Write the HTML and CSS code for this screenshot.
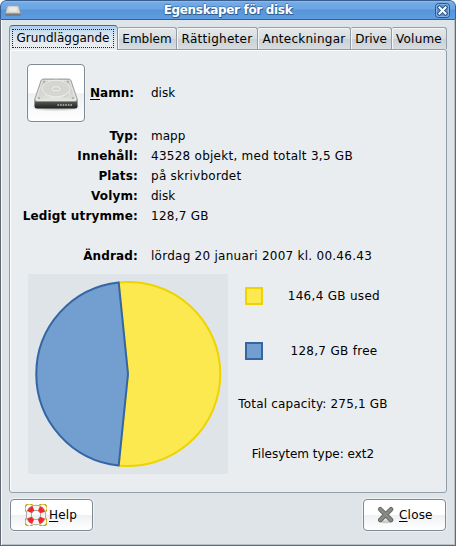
FILE: index.html
```html
<!DOCTYPE html>
<html lang="sv">
<head>
<meta charset="utf-8">
<title>Egenskaper för disk</title>
<link rel="stylesheet" href="styles.css">
</head>
<body>
<svg class="defs" width="0" height="0">
<defs>
<linearGradient id="top" x1="0" y1="0" x2="0" y2="1"><stop offset="0" stop-color="#c6c7c3"/><stop offset="1" stop-color="#dededb"/></linearGradient>
<linearGradient id="front" x1="0" y1="0" x2="0" y2="1"><stop offset="0" stop-color="#6a6d69"/><stop offset="1" stop-color="#1d201d"/></linearGradient>
<filter id="soft" x="-20%" y="-80%" width="140%" height="260%"><feGaussianBlur stdDeviation="1.3"/></filter>
<symbol id="drive" viewBox="0 0 48 36">
<ellipse cx="24" cy="31.5" rx="22" ry="3.5" fill="#777" opacity=".5" filter="url(#soft)"/>
<path d="M2.5 24 45.5 24V31Q45.5 33.5 43 33.5H5Q2.5 33.5 2.5 31Z" fill="url(#front)"/>
<path d="M9 5.5Q9.7 4 11.5 4H36.5Q38.3 4 39 5.5L45 23.5Q46 26.5 43 26.5H5Q2 26.5 3 23.5Z" fill="url(#top)" stroke="#8c8e89" stroke-width=".8"/>
<path d="M10.5 5.5H37.5L43.8 25H4.2Z" fill="none" stroke="#f0f0ee" stroke-width=".7"/>
<ellipse cx="24" cy="13.5" rx="14" ry="8.3" fill="#d5d6d2" stroke="#f0f0ee" stroke-width=".8"/>
<path d="M13 20.5Q23 25.5 33 20.5L37 17Q39 19 35 23H12Z" fill="#cfd0cc" stroke="#f0f0ee" stroke-width=".6"/>
<ellipse cx="24" cy="13.8" rx="4" ry="2.1" fill="#d0d1cd" stroke="#f4f4f2" stroke-width=".9"/>
<g fill="#a4a6a1"><circle cx="12" cy="6.5" r="1"/><circle cx="36" cy="6.5" r="1"/><circle cx="7" cy="23" r="1"/><circle cx="41" cy="23" r="1"/></g>
<path d="M25.5 30H40" stroke="#9a9d97" stroke-width="1.8" stroke-dasharray="1.6 1"/>
</symbol>
</defs>
</svg>
<div class="window">
<header class="titlebar">
<svg class="mini" viewBox="0 0 48 36" preserveAspectRatio="none"><path d="M1 24H47V35H1Z" fill="#777a77"/><path d="M8 3H40L46 27H2Z" fill="#d9dad7" stroke="#a8aaa6" stroke-width="2"/><ellipse cx="24" cy="14" rx="13" ry="8" fill="#e9e9e7"/></svg>
<h1 class="title">Egenskaper för disk</h1>
<svg class="close-x" viewBox="0 0 15 15"><rect x=".5" y=".5" width="14" height="14" rx="3" fill="#5b94d4" stroke="#2f5684"/><rect x="1.5" y="1.5" width="12" height="12" rx="2" fill="none" stroke="#82b3e7"/><path d="M4.5 4.5 10.5 10.5M10.5 4.5 4.5 10.5" stroke="#2f5684" stroke-width="4" stroke-linecap="square"/><path d="M4.5 4.5 10.5 10.5M10.5 4.5 4.5 10.5" stroke="#fff" stroke-width="2" stroke-linecap="square"/></svg>
</header>
<main class="content">
<nav class="tabs">
<div class="tab active"><span class="focus">Grundläggande</span></div>
<div class="tab t2">Emblem</div>
<div class="tab t3">Rättigheter</div>
<div class="tab t4">Anteckningar</div>
<div class="tab t5">Drive</div>
<div class="tab t6">Volume</div>
</nav>
<section class="panel">
<div class="name-row">
<div class="icon-button"><svg width="48" height="36"><use href="#drive"/></svg></div>
<b class="name-label"><u>N</u>amn:</b>
<span class="name-value">disk</span>
</div>
<div class="props">
<b>Typ:</b><span>mapp</span>
<b>Innehåll:</b><span class="wide">43528 objekt, med totalt 3,5 GB</span>
<b>Plats:</b><span class="wide">på skrivbordet</span>
<b>Volym:</b><span>disk</span>
<b>Ledigt utrymme:</b><span class="wide">128,7 GB</span>
<b class="gap">Ändrad:</b><span class="gap wide">lördag 20 januari 2007 kl. 00.46.43</span>
</div>
<div class="usage">
<svg class="pie" viewBox="0 0 200 200"><path d="M100 100 90.7 8.5A92 92 0 1 1 90.7 191.5Z" fill="#fce94f" stroke="#edd400" stroke-width="2"/><path d="M100 100 90.7 191.5A92 92 0 0 1 90.7 8.5Z" fill="#729fcf" stroke="#3465a4" stroke-width="2"/></svg>
<div class="legend">
<div class="key"><i class="swatch used"></i><span class="key-text">146,4 GB used</span></div>
<div class="key"><i class="swatch free"></i><span class="key-text">128,7 GB free</span></div>
<div class="fact total">Total capacity: 275,1 GB</div>
<div class="fact fs">Filesytem type: ext2</div>
</div>
</div>
</section>
<footer class="actions">
<div class="button help">
<svg width="22" height="22" viewBox="0 0 22 22"><circle cx="11" cy="11" r="7.2" fill="none" stroke="#8d8f8a" stroke-width="6"/><circle cx="11" cy="11" r="7.2" fill="none" stroke="#f4f4f2" stroke-width="4.6"/><circle cx="11" cy="11" r="7.2" fill="none" stroke="#ef2929" stroke-width="4.8" stroke-dasharray="5.6 5.71" stroke-dashoffset="-2.85"/><g fill="none" stroke="#c4a000" stroke-width="1.3"><path d="M1.2 7.5A4 4 0 1 1 7.5 1.2M14.5 1.2A4 4 0 1 1 20.8 7.5M20.8 14.5A4 4 0 1 1 14.5 20.8M7.5 20.8A4 4 0 1 1 1.2 14.5"/></g></svg>
<span><u>H</u>elp</span>
</div>
<div class="button close">
<svg width="18" height="18" viewBox="0 0 18 18"><ellipse cx="9" cy="15.8" rx="5" ry="1.5" fill="#ccc"/><path d="M3.3 3.3 14 14M14 3.3 3.3 14" stroke="#666963" stroke-width="4.6" stroke-linecap="round"/><path d="M3.3 3.3 14 14M14 3.3 3.3 14" stroke="#888a85" stroke-width="2.8" stroke-linecap="round"/></svg>
<span><u>C</u>lose</span>
</div>
</footer>
</main>
</div>
</body>
</html>
```
FILE: styles.css
```css
* { box-sizing: border-box; }
body { margin: 0; background: #fff; font: 12px/20px "DejaVu Sans", sans-serif; color: #000; white-space: nowrap; }
svg { display: block; flex: none; }
.defs { position: absolute; }
u { text-underline-offset: 2px; text-decoration-thickness: 1px; text-decoration-skip-ink: none; }
.window { width: 456px; height: 546px; background: #dfe4e8; border-radius: 6px 6px 0 0; overflow: hidden; }
.titlebar { height: 20px; display: flex; align-items: center; padding: 0 5px 0 4px; border: 1px solid #395f90; border-radius: 6px 6px 0 0; background: linear-gradient(#8dbcf0, #70a9e5 2px, #6ca5e2 8px, #5595d8 9px, #5f9de0); }
.mini { width: 16px; height: 11px; }
.title { flex: 1; margin: 0; text-align: center; font-size: 12px; line-height: 18px; letter-spacing: -.33px; color: #fff; text-shadow: 1px 1px #315e93, 0 1px #315e93, -1px 0 #477db8, 0 -1px #477db8; }
.close-x { width: 15px; height: 15px; }
.content { height: 526px; padding: 5px 8px 0; border: solid #626974; border-width: 0 1px 1px; box-shadow: inset 1px 0 #f8f9fa, inset -1px -1px #b8c0c8; }
.tabs { height: 24px; display: flex; align-items: flex-end; }
.tab { height: 22px; border: 1px solid #939ea8; border-left: 0; border-bottom: 0; border-radius: 2px 3px 0 0; background: linear-gradient(#e4e8eb, #d8dde1 50%, #c9d0d5 51%, #d7dce0); box-shadow: inset 1px 1px #f3f5f6; text-align: center; line-height: 22px; }
.active { width: 109px; height: 25px; margin-bottom: -1px; padding: 3px; border: 1px solid #7f91a3; border-top-color: #3d6c9c; border-bottom: 0; border-radius: 4px 4px 0 0; background: linear-gradient(#a9cdf0, #d4e2ee 7px, #e8ecef 18px); position: relative; box-shadow: none; }
.focus { display: block; height: 19px; border: 1px dotted #222; line-height: 16px; margin-left: -1px; }
.t2 { width: 59px; } .t3 { width: 81px; letter-spacing: .27px; } .t4 { width: 93px; letter-spacing: .25px; } .t5 { width: 41px; letter-spacing: -.1px; } .t6 { width: 55px; letter-spacing: .2px; }
.panel { height: 444px; width: 438px; border: 1px solid #939ea8; border-radius: 0 3px 3px 3px; background: #e9edf0; box-shadow: inset 1px 1px #fafbfc; padding: 14px 0 0 17px; }
.name-row { display: flex; align-items: center; height: 58px; }
.icon-button, .button { border: 1px solid #7d8993; border-radius: 4px; background: linear-gradient(#fff 50%, #eef1f4 51%, #fff); box-shadow: 0 0 0 1px #eef1f3; display: flex; align-items: center; }
.icon-button { width: 58px; height: 58px; justify-content: center; }
.name-label { width: 49px; text-align: right; margin-right: 17px; }
.props { display: grid; grid-template-columns: 120px 1fr; column-gap: 13px; grid-auto-rows: 20px; margin: 4px 0 0 -9px; }
.props b { text-align: right; letter-spacing: .15px; }
.wide { letter-spacing: .26px; }
.props .gap { margin-top: 20px; }
.usage { display: flex; margin: 28px 0 0 1px; }
.pie { width: 200px; height: 200px; background: #dfe4e8; }
.legend { width: 150px; margin-left: 10px; padding-top: 12px; }
.key { height: 20px; margin-bottom: 35px; display: flex; align-items: center; padding-left: 7px; }
.swatch { width: 18px; height: 18px; border: 2px solid #edd400; background: #fce94f; }
.free { border-color: #3465a4; background: #729fcf; }
.key-text { flex: 1; text-align: center; margin: 0 8px 0 25px; letter-spacing: .3px; }
.fact { text-align: center; }
.total { margin: -2px 0 30px; letter-spacing: .17px; }
.actions { display: flex; justify-content: space-between; padding: 6px 1px 0; width: 438px; }
.button { width: 83px; height: 32px; }
.help { padding-left: 14px; gap: 2px; letter-spacing: .2px; }
.close { padding-left: 13px; gap: 4px; letter-spacing: .2px; }
```
